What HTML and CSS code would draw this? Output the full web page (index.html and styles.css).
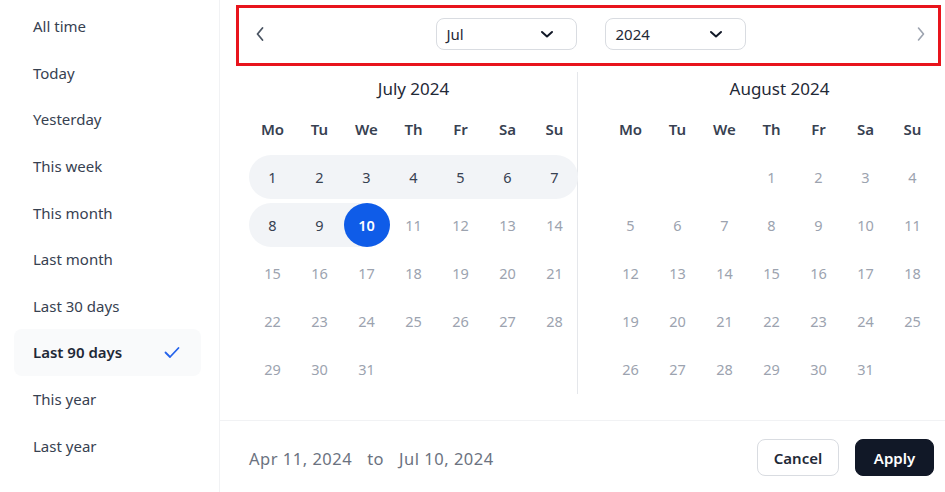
FILE: index.html
```html
<!DOCTYPE html>
<html>
<head>
<meta charset="utf-8">
<link rel="stylesheet" href="styles.css">
</head>
<body>
<div class="app">
  <aside class="sidebar">
    <div class="item">All time</div>
    <div class="item">Today</div>
    <div class="item">Yesterday</div>
    <div class="item">This week</div>
    <div class="item">This month</div>
    <div class="item">Last month</div>
    <div class="item">Last 30 days</div>
    <div class="item active">Last 90 days
      <svg class="check" width="20" height="20" viewBox="0 0 20 20"><path d="M3.5 10.5l4.5 4.5 8.5-9" fill="none" stroke="#2563eb" stroke-width="1.8" stroke-linecap="round" stroke-linejoin="round"/></svg>
    </div>
    <div class="item">This year</div>
    <div class="item">Last year</div>
  </aside>
  <main class="main">
    <div class="nav">
      <svg class="chev" width="10" height="16" viewBox="0 0 10 16"><path d="M7.5 2L2.5 8l5 6" fill="none" stroke="#4b5563" stroke-width="1.8" stroke-linecap="round" stroke-linejoin="round"/></svg>
      <div class="selects">
        <div class="select">Jul<svg width="14" height="10" viewBox="0 0 14 10"><path d="M2 3l5 4.5L12 3" fill="none" stroke="#111827" stroke-width="2" stroke-linecap="round" stroke-linejoin="round"/></svg></div>
        <div class="select">2024<svg width="14" height="10" viewBox="0 0 14 10"><path d="M2 3l5 4.5L12 3" fill="none" stroke="#111827" stroke-width="2" stroke-linecap="round" stroke-linejoin="round"/></svg></div>
      </div>
      <svg class="chev" width="10" height="16" viewBox="0 0 10 16"><path d="M2.5 2l5 6-5 6" fill="none" stroke="#9ca3af" stroke-width="1.6" stroke-linecap="round" stroke-linejoin="round"/></svg>
    </div>
    <div class="months">
      <section class="month left">
        <div class="title">July 2024</div>
        <div class="grid">
          <div class="wd">Mo</div><div class="wd">Tu</div><div class="wd">We</div><div class="wd">Th</div><div class="wd">Fr</div><div class="wd">Sa</div><div class="wd">Su</div>
          <div class="d in first">1</div><div class="d in">2</div><div class="d in">3</div><div class="d in">4</div><div class="d in">5</div><div class="d in">6</div><div class="d in last">7</div>
          <div class="d in first">8</div><div class="d in">9</div><div class="d sel"><span>10</span></div><div class="d">11</div><div class="d">12</div><div class="d">13</div><div class="d">14</div>
          <div class="d">15</div><div class="d">16</div><div class="d">17</div><div class="d">18</div><div class="d">19</div><div class="d">20</div><div class="d">21</div>
          <div class="d">22</div><div class="d">23</div><div class="d">24</div><div class="d">25</div><div class="d">26</div><div class="d">27</div><div class="d">28</div>
          <div class="d">29</div><div class="d">30</div><div class="d">31</div>
        </div>
      </section>
      <section class="month right">
        <div class="title">August 2024</div>
        <div class="grid">
          <div class="wd">Mo</div><div class="wd">Tu</div><div class="wd">We</div><div class="wd">Th</div><div class="wd">Fr</div><div class="wd">Sa</div><div class="wd">Su</div>
          <div class="d"></div><div class="d"></div><div class="d"></div><div class="d">1</div><div class="d">2</div><div class="d">3</div><div class="d">4</div>
          <div class="d">5</div><div class="d">6</div><div class="d">7</div><div class="d">8</div><div class="d">9</div><div class="d">10</div><div class="d">11</div>
          <div class="d">12</div><div class="d">13</div><div class="d">14</div><div class="d">15</div><div class="d">16</div><div class="d">17</div><div class="d">18</div>
          <div class="d">19</div><div class="d">20</div><div class="d">21</div><div class="d">22</div><div class="d">23</div><div class="d">24</div><div class="d">25</div>
          <div class="d">26</div><div class="d">27</div><div class="d">28</div><div class="d">29</div><div class="d">30</div><div class="d">31</div>
        </div>
      </section>
    </div>
    <footer class="footer">
      <div class="range"><span>Apr 11, 2024</span><span>to</span><span>Jul 10, 2024</span></div>
      <div class="buttons">
        <button class="btn cancel">Cancel</button>
        <button class="btn apply">Apply</button>
      </div>
    </footer>
  </main>
</div>
</body>
</html>
```
FILE: styles.css
```css
* { box-sizing: border-box; }
html, body { margin: 0; padding: 0; background: #fff; }
body {
  width: 945px; height: 492px; overflow: hidden;
  font-family: "Noto Sans", "Open Sans", sans-serif;
  color: #374151;
}
.app { display: flex; height: 492px; }
.sidebar {
  width: 220px; flex: none;
  border-right: 1px solid #f1f2f4;
  padding: 3px 18px 0 14px;
  display: flex; flex-direction: column;
}
.item {
  height: 46.6px; display: flex; align-items: center; justify-content: space-between;
  padding: 0 19px 0 19px; font-size: 15px; color: #374151; border-radius: 8px;
}
.item.active { background: #f9fafb; font-weight: 600; color: #1f2937; }
.check { margin-right: 0; }
.main { flex: 1; display: flex; flex-direction: column; min-width: 0; }
.nav {
  margin: 5px 4px 0 16px; height: 61px;
  border: 3px solid #e8141c;
  display: flex; align-items: center; justify-content: space-between;
  padding: 0 12px 4px 16px;
}
.chev { display: block; }
.selects { display: flex; gap: 28px; margin-left: 0; }
.select {
  width: 141px; height: 32px; border: 1px solid #d9dce1; border-radius: 8px;
  display: flex; align-items: center; justify-content: space-between;
  padding: 0 22px 0 10px; font-size: 15px; color: #1f2937;
}
.select svg { display: block; }
.months { display: flex; flex: 1; padding-top: 6px; }
.month { padding-left: 29px; padding-top: 6px; }
.month.left { width: 358px; border-right: 1px solid #e5e7eb; height: 322px; }
.month.right { padding-left: 29px; }
.title { text-align: center; font-size: 17px; color: #1f2937; height: 22px; line-height: 22px; margin-top: 0; width: 329px; }
.month.right .title { padding-left: 8px; width: 337px; }
.grid {
  display: grid; grid-template-columns: repeat(7, 47px); grid-auto-rows: 44px; row-gap: 4px;
  margin-top: 7px;
}
.wd { display: flex; align-items: center; justify-content: center; font-size: 15px; font-weight: 600; color: #374151; height: 44px; }
.d { display: flex; align-items: center; justify-content: center; font-size: 14.5px; color: #9ca3af; }
.d.in { background: #f2f4f7; color: #374151; }
.d.first { border-radius: 22px 0 0 22px; }
.d.last { border-radius: 0 22px 22px 0; }
.d.sel { background: linear-gradient(to right, #f2f4f7 50%, transparent 50%); }
.d.sel span {
  width: 46px; height: 44px; border-radius: 50%; background: #0f5ce8; color: #fff;
  font-weight: 600; display: flex; align-items: center; justify-content: center;
}
.footer {
  height: 72px; flex: none; border-top: 1px solid #f1f2f4;
  display: flex; align-items: center; justify-content: space-between;
  padding: 0 11px 0 29px;
}
.range { display: flex; gap: 15px; font-size: 16.5px; letter-spacing: 0.5px; color: #6b7280; padding-top: 4px; }
.buttons { display: flex; gap: 16px; padding-top: 2px; }
.btn { font-family: inherit; font-size: 15px; height: 37px; border-radius: 8px; font-weight: 600; cursor: pointer; }
.cancel { width: 82px; background: #fff; border: 1px solid #d9dce1; color: #1f2937; }
.apply { width: 79px; background: #111827; border: 1px solid #111827; color: #fff; }
```
